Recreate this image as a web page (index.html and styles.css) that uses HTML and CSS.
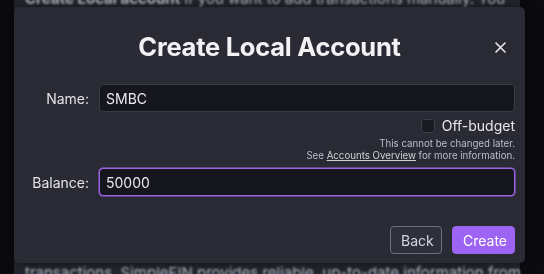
FILE: index.html
```html
<!DOCTYPE html>
<html>
<head>
<meta charset="utf-8">
<link rel="stylesheet" href="styles.css">
</head>
<body>
<div class="page">
  <div class="panel">
    <p class="bg-text top"><b>Create Local account</b> if you want to add transactions manually. You</p>
    <p class="bg-text bottom">transactions. SimpleFIN provides reliable, up-to-date information from</p>
  </div>
</div>
<div class="modal">
  <div class="header">
    <h1 class="title">Create Local Account</h1>
    <button class="close" aria-label="Close">
      <svg width="11" height="11" viewBox="0 0 11 11"><path d="M1 1L10 10M10 1L1 10" stroke="#e6e6ec" stroke-width="1.6" stroke-linecap="round"/></svg>
    </button>
  </div>
  <div class="row">
    <label class="label">Name:</label>
    <div class="input">SMBC</div>
  </div>
  <div class="offbudget">
    <div class="check-row">
      <span class="checkbox"></span>
      <span class="check-label">Off-budget</span>
    </div>
    <div class="note first">This cannot be changed later.</div>
    <div class="note">See <a class="link">Accounts Overview</a> for more information.</div>
  </div>
  <div class="row">
    <label class="label">Balance:</label>
    <div class="input focused">50000</div>
  </div>
  <div class="actions">
    <button class="btn back">Back</button>
    <button class="btn primary">Create</button>
  </div>
</div>
</body>
</html>
```
FILE: styles.css
```css
* { box-sizing: border-box; }
html, body { margin: 0; padding: 0; }
body {
  width: 544px;
  height: 274px;
  overflow: hidden;
  background: #0a0a0f;
  font-family: Inter, "Noto Sans", sans-serif;
  color: #e6e6ec;
}
.page {
  padding-left: 14px;
  width: 520px;
  height: 274px;
}
.panel {
  background: #24252e;
  height: 274px;
  display: flex;
  flex-direction: column;
  justify-content: space-between;
  padding: 0 0 0 11px;
}
.bg-text {
  margin: 0;
  font-size: 15px;
  color: #b9bac4;
  white-space: nowrap;
  overflow: hidden;
  filter: blur(1.2px);
}
.bg-text.top { margin-top: -11px; }
.bg-text.bottom { margin-bottom: -8px; }

.modal {
  position: fixed;
  left: 14px;
  top: 7px;
  width: 511px;
  height: 256px;
  background: #292a34;
  border-radius: 5px;
  box-shadow: 0 0 12px rgba(0,0,0,0.5);
  padding: 0 10px;
  display: flex;
  flex-direction: column;
}
.header {
  height: 77px;
  display: flex;
  align-items: center;
  justify-content: center;
  position: relative;
}
.title {
  margin: 0;
  font-size: 25.5px;
  font-weight: 700;
  color: #f2f2f5;
  letter-spacing: -0.25px;
  padding-top: 2px;
}
.close {
  position: absolute;
  right: 9px;
  top: 35px;
  background: none;
  border: 0;
  padding: 0;
  width: 11px;
  height: 11px;
  display: flex;
}
.row {
  display: flex;
  align-items: center;
  gap: 10px;
}
.label {
  width: 65px;
  text-align: right;
  font-size: 14px;
  color: #e2e2e8;
}
.input {
  flex: 1;
  height: 28px;
  background: #16161e;
  border: 1px solid #3a3b46;
  border-radius: 4px;
  padding: 0 6px;
  display: flex;
  align-items: center;
  font-size: 14px;
  color: #e8e8ee;
}
.input.focused {
  border-color: #9b63e8;
  box-shadow: 0 0 0 0.5px #9b63e8;
}
.offbudget {
  display: flex;
  flex-direction: column;
  align-items: flex-end;
  padding-top: 5px;
  padding-bottom: 6px;
}
.check-row {
  display: flex;
  align-items: center;
  gap: 7px;
  height: 18px;
}
.checkbox {
  display: block;
  flex: 0 0 14px;
  width: 14px;
  height: 14px;
  border-radius: 3px;
  background: #1a1a23;
  border: 1px solid #3c3d49;
}
.check-label {
  font-size: 14px;
  line-height: 18px;
  color: #e6e6ec;
}
.note {
  font-size: 9.7px;
  line-height: 12px;
  color: #bdbec8;
}
.note.first { margin-top: 3px; }
.link {
  text-decoration: underline;
  color: #d0d0d8;
}
.actions {
  display: flex;
  justify-content: flex-end;
  gap: 10px;
  margin-top: 30px;
}
.btn {
  height: 28px;
  border-radius: 4px;
  font-family: inherit;
  font-size: 14px;
  padding: 0 10px;
}
.back {
  width: 52px;
  background: #2f303b;
  border: 1px solid #6b6d7a;
  color: #d6d6de;
}
.primary {
  width: 63px;
  background: #9d64f3;
  border: 1px solid #9d64f3;
  color: #ffffff;
}
```
